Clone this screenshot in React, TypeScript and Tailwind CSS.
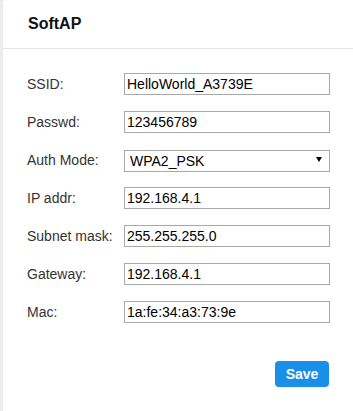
const fields = [
    { label: "SSID:", value: "HelloWorld_A3739E" },
    { label: "Passwd:", value: "123456789" },
    { label: "Auth Mode:", value: "WPA2_PSK", select: true },
    { label: "IP addr:", value: "192.168.4.1" },
    { label: "Subnet mask:", value: "255.255.255.0" },
    { label: "Gateway:", value: "192.168.4.1" },
    { label: "Mac:", value: "1a:fe:34:a3:73:9e" },
];

export default function App() {
    return (
        <div className="flex h-[411px] w-[353px] bg-[#ececec] pl-[3px] font-['Liberation_Sans',Arial,sans-serif]">
            <div className="flex flex-1 flex-col rounded-tl-[3px] bg-white">
                <div className="flex h-[49px] items-center border-[#e6e6e6] border-b pl-[25px]">
                    <span className="font-bold text-[16px] text-[#111]">SoftAP</span>
                </div>
                <div className="flex flex-col gap-[16px] pt-[24px] pr-[23px] pl-[24px]">
                    {fields.map((f) => (
                        <div key={f.label} className="flex h-[22px] items-center">
                            <label className="w-[97px] text-[14px] text-[#333]">{f.label}</label>
                            {f.select ? (
                                <div className="relative h-[22px] flex-1">
                                    <select
                                        className="h-full w-full appearance-none border border-[#a9a9a9] bg-white pl-[5px] text-[14px] text-black outline-none"
                                        defaultValue={f.value}
                                    >
                                        <option>WPA2_PSK</option>
                                        <option>WPA_PSK</option>
                                        <option>OPEN</option>
                                    </select>
                                    <svg className="pointer-events-none absolute top-[8px] right-[8px]" width="6" height="5" viewBox="0 0 6 5">
                                        <path d="M0 0H6L3 5Z" fill="#000" />
                                    </svg>
                                </div>
                            ) : (
                                <input
                                    className="h-[22px] flex-1 border border-[#a9a9a9] px-[2px] text-[14px] text-black outline-none"
                                    defaultValue={f.value}
                                />
                            )}
                        </div>
                    ))}
                </div>
                <div className="flex justify-end pt-[38px] pr-[24px]">
                    <button
                        type="button"
                        className="h-[26px] w-[54px] rounded-[4px] bg-[#1a8fe8] font-semibold text-[14px] text-white"
                    >
                        Save
                    </button>
                </div>
            </div>
        </div>
    );
}
